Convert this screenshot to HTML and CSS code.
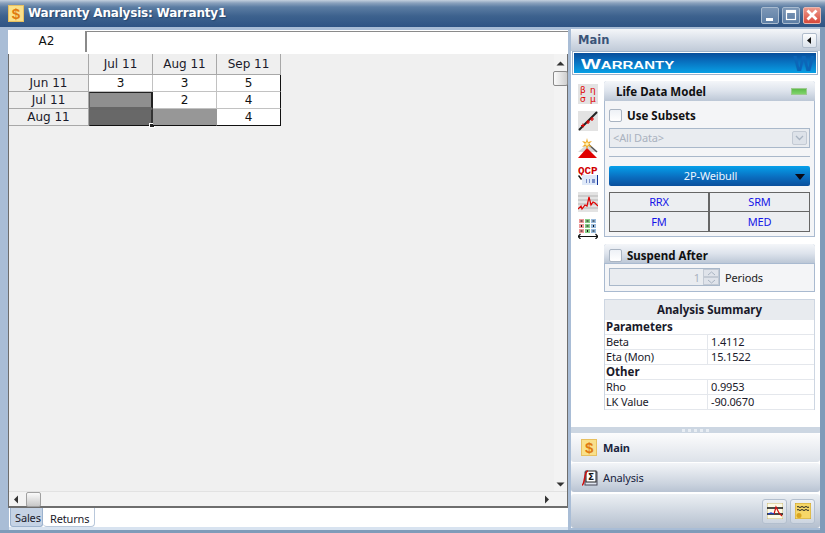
FILE: index.html
```html
<!DOCTYPE html>
<html lang="en">
<head>
<meta charset="utf-8">
<title>Warranty Analysis: Warranty1</title>
<link rel="stylesheet" href="styles.css">
</head>
<body>
<div class="window">
  <header class="titlebar">
    <span class="app-icon">$</span>
    <span class="title">Warranty Analysis: Warranty1</span>
    <div class="controls">
      <span class="ctl"><svg width="16" height="15" viewBox="0 0 16 15"><rect x="4" y="10" width="7" height="3" fill="#fff"/></svg></span>
      <span class="ctl"><svg width="16" height="15" viewBox="0 0 16 15"><rect x="3.500" y="2.500" width="9" height="9" fill="none" stroke="#fff" stroke-width="1.200"/><rect x="3" y="2" width="10" height="3" fill="#fff"/></svg></span>
      <span class="ctl ctl-close"><svg width="16" height="15" viewBox="0 0 16 15"><path d="M3.500 2.500l9 9M12.500 2.500l-9 9" stroke="#fff" stroke-width="2.800"/></svg></span>
    </div>
  </header>
  <div class="main">
    <section class="sheet-col">
      <div class="formula">
        <div class="cellref">A2</div>
        <div class="formula-input"></div>
      </div>
      <div class="sheet-pane">
        <div class="sheet-top">
          <div class="sheet-area">
            <div class="grid">
              <div class="hd corner"></div><div class="hd">Jul 11</div><div class="hd">Aug 11</div><div class="hd">Sep 11</div>
              <div class="rh">Jun 11</div><div class="c">3</div><div class="c">3</div><div class="c">5</div>
              <div class="rh">Jul 11</div><div class="c sel1"></div><div class="c">2</div><div class="c">4</div>
              <div class="rh">Aug 11</div><div class="c sel2"><span class="handle"></span></div><div class="c sel3"></div><div class="c">4</div>
            </div>
          </div>
          <div class="vscroll">
            <svg class="arrow-v" width="13" height="13" viewBox="0 0 13 13"><path d="M2.500 8.500h8L6.500 4.500z" fill="#333"/></svg>
            <div class="vthumb"></div>
            <svg class="arrow-v arrow-end" width="13" height="13" viewBox="0 0 13 13"><path d="M2.500 4.500h8L6.500 8.500z" fill="#333"/></svg>
          </div>
        </div>
        <div class="hscroll">
          <svg width="17" height="15" viewBox="0 0 17 15"><path d="M9 3.500v8L5 7.500z" fill="#333"/></svg>
          <div class="hthumb"></div>
          <svg class="arrow-end" width="16" height="15" viewBox="0 0 16 15"><path d="M7 3.500v8L11 7.500z" fill="#333"/></svg>
          <div class="scroll-corner"></div>
        </div>
      </div>
      <div class="tabs">
        <span class="tab tab-off">Sales</span>
        <span class="tab tab-on">Returns</span>
      </div>
    </section>

    <aside class="side">
      <div class="side-head">
        <span>Main</span>
        <span class="collapse"><svg width="7" height="7" viewBox="0 0 7 7"><path d="M5 0v7L1 3.500z" fill="#111"/></svg></span>
      </div>
      <div class="banner">
        <span class="banner-text">Warranty</span>
        <span class="banner-w">W</span>
      </div>
      <div class="side-body">
        <div class="tools">
          <svg class="tool" width="20" height="20" viewBox="0 0 20 20"><rect width="20" height="20" fill="#e3e3e3"/><text class="greek" x="2" y="9">β</text><text class="greek" x="12" y="9">η</text><text class="greek" x="2" y="18">σ</text><text class="greek" x="12" y="18">μ</text></svg>
          <svg class="tool" width="20" height="20" viewBox="0 0 20 20"><rect width="20" height="20" fill="#e3e3e3"/><path d="M1 19L19 1" stroke="#222" stroke-width="2"/><path d="M3 14.500h4M5 12.500v4M8 11h4M10 9v4M12 8h4M14 6v4" stroke="#e00000" stroke-width="1.200"/></svg>
          <svg class="tool" width="20" height="20" viewBox="0 0 20 20"><path d="M0 14L9 6l9 8z" fill="#d8d8d8"/><path d="M0 20L9 10l10 10z" fill="#e00000"/><path d="M10 6l9 8" stroke="#555" stroke-width="1.600"/><path d="M9 0l1 4 4-1-3 3 3 3-4-1-1 4-1-4-4 1 3-3-3-3 4 1z" fill="#f0a820"/><circle cx="9" cy="6" r="1.800" fill="#fff2b0"/></svg>
          <svg class="tool" width="20" height="20" viewBox="0 0 20 20"><text class="qcp" x="0" y="9">QCP</text><rect x="4" y="10" width="16" height="10" fill="#dfe9f8"/><path d="M0.500 10.500l3 4" stroke="#111" stroke-width="1.400"/><path d="M8 15h1M8 17h1M11 15h1M11 17h1M14 15h3M14 17h3M19.500 10v10" stroke="#113399"/></svg>
          <svg class="tool" width="20" height="20" viewBox="0 0 20 20"><rect width="20" height="20" fill="#e3e3e3"/><path d="M0 4h20M0 8h20M0 12h20M0 16h20" stroke="#b5b5b5"/><path d="M0 17l3-3 1 3 3-4 2 1 2-9 2 8 2-3 2 1 3 3" fill="none" stroke="#e00000" stroke-width="1.200"/></svg>
          <svg class="tool" width="20" height="20" viewBox="0 0 20 20"><rect x="1" y="0" width="5" height="4" fill="#e99"/><rect x="7" y="0" width="5" height="4" fill="#8c8"/><rect x="13" y="0" width="5" height="4" fill="#9bd"/><rect x="1" y="5" width="5" height="4" fill="#e99"/><rect x="7" y="5" width="5" height="4" fill="#8c8"/><rect x="13" y="5" width="5" height="4" fill="#9bd"/><rect x="1" y="10" width="5" height="4" fill="#e99"/><rect x="7" y="10" width="5" height="4" fill="#8c8"/><rect x="13" y="10" width="5" height="4" fill="#9bd"/><path d="M2.500 2h2M8.500 2h2M14.500 2h2M3.500 6v2M8.500 7h2M15.500 6v2M2.500 12h2M9.500 11v2M14.500 12h2" stroke="#111"/><path d="M0 17.500h20M2.500 15l-2.500 2.500 2.500 2.500M17.500 15l2.500 2.500-2.500 2.500" fill="none" stroke="#111" stroke-width="1.200"/></svg>
        </div>
        <div class="panels">
          <div class="group">
            <div class="group-head"><span>Life Data Model</span><span class="led"></span></div>
            <div class="group-body">
              <label class="check-row"><span class="check"></span><span>Use Subsets</span></label>
              <div class="select-off">
                <span>&lt;All Data&gt;</span>
                <span class="select-btn"><svg width="9" height="6" viewBox="0 0 9 6"><path d="M1 1l3.500 3.500L8 1" fill="none" stroke="#a9b4c2" stroke-width="1.300"/></svg></span>
              </div>
              <div class="rule"></div>
              <div class="dist">
                <span>2P-Weibull</span>
                <svg class="dist-arrow" width="10" height="6" viewBox="0 0 10 6"><path d="M0 0h10L5 6z" fill="#0a0a14"/></svg>
              </div>
              <div class="methods">
                <span>RRX</span><span>SRM</span><span>FM</span><span>MED</span>
              </div>
            </div>
          </div>
          <div class="group group-suspend">
            <div class="group-head head-suspend"><span class="check"></span><span>Suspend After</span></div>
            <div class="suspend-body">
              <div class="spin">
                <span class="spin-val">1</span>
                <span class="spin-btns">
                  <span class="spin-btn"><svg width="9" height="5" viewBox="0 0 9 5"><path d="M1 4l3.500-3L8 4" fill="none" stroke="#a9b4c2"/></svg></span>
                  <span class="spin-btn"><svg width="9" height="5" viewBox="0 0 9 5"><path d="M1 1l3.500 3L8 1" fill="none" stroke="#a9b4c2"/></svg></span>
                </span>
              </div>
              <span>Periods</span>
            </div>
          </div>
          <div class="summary">
            <div class="sum-title">Analysis Summary</div>
            <div class="sum-sec">Parameters</div>
            <div class="sum-row"><span>Beta</span><span>1.4112</span></div>
            <div class="sum-row"><span>Eta (Mon)</span><span>15.1522</span></div>
            <div class="sum-sec">Other</div>
            <div class="sum-row"><span>Rho</span><span>0.9953</span></div>
            <div class="sum-row"><span>LK Value</span><span>-90.0670</span></div>
          </div>
        </div>
      </div>
      <div class="splitter"><i></i><i></i><i></i><i></i><i></i></div>
      <div class="nav nav-on">
        <span class="nav-dollar">$</span><span>Main</span>
      </div>
      <div class="nav">
        <svg width="17" height="16" viewBox="0 0 17 16"><rect x="4" y="2" width="12" height="13" fill="#dfe5f0" stroke="#445"/><rect x="5" y="1" width="10" height="11" fill="#fff" stroke="#222"/><text class="sigma" x="7" y="10">Σ</text><path d="M1 15C4 15 3 1 7 1" fill="none" stroke="#d01010" stroke-width="1.500"/></svg>
        <span>Analysis</span>
      </div>
      <div class="footer">
        <span class="foot-btn"><svg width="16" height="16" viewBox="0 0 16 16"><rect width="16" height="16" fill="#fdfbe8" stroke="#c9b870"/><path d="M0 5h16M0 11h16" stroke="#111" stroke-width="1.300"/><path d="M7 11l2-7 3 6 3 3" fill="none" stroke="#d01010" stroke-width="1.200"/><path d="M1 11l3-1 3 1" fill="none" stroke="#1a3fd0" stroke-width="1.200"/></svg></span>
        <span class="foot-btn"><svg width="16" height="16" viewBox="0 0 16 16"><rect width="16" height="16" fill="#f6d768" stroke="#c9a030"/><path d="M2 4q1-1 2 0t2 0 2 0 2 0 2 0 2 0M2 7q1-1 2 0t2 0 2 0 2 0 2 0 2 0" fill="none" stroke="#222"/><circle cx="4" cy="12.500" r="2.500" fill="#d9a520"/></svg></span>
      </div>
    </aside>
  </div>
</div>
</body>
</html>
```
FILE: styles.css
```css
* { box-sizing: border-box; }
html, body { margin: 0; padding: 0; }
body { width: 825px; height: 533px; overflow: hidden; font-family: "DejaVu Sans", "Liberation Sans", sans-serif; font-size: 12px; color: #111; }
.window { width: 825px; height: 533px; display: flex; flex-direction: column; background: #a9bdd6; border-bottom: 3px solid #7f9bb9; }
.titlebar { height: 27px; flex: none; display: flex; align-items: center; padding-left: 8px; background: linear-gradient(to bottom, #c4d0de 0, #8ba2bd 3px, #5c7da3 7px, #3d628e 16px, #2f5484 27px); color: #fff; }
.app-icon { width: 16px; height: 17px; background: #f9e08a; border: 1px solid #e8c060; color: #e07a10; font: bold 15px/15px "Liberation Sans", sans-serif; text-align: center; }
.title { margin-left: 4px; font: bold 12px/17px "DejaVu Sans", sans-serif; letter-spacing: -0.2px; text-shadow: 1px 1px 1px #25466f; }
.controls { margin-left: auto; margin-right: 4px; display: flex; gap: 3px; padding-top: 3px; }
.ctl { width: 18px; height: 17px; display: flex; align-items: center; justify-content: center; overflow: hidden; border: 1px solid #a9bbcf; border-radius: 2px; background: linear-gradient(#7d97b6, #5d7ea5); }
.ctl svg { flex: none; }
.ctl-close { background: linear-gradient(#ee9a8c, #d8483a); border-color: #e8b8b0; }
.main { flex: 1; display: flex; min-height: 0; border-right: 5px solid #7f9bb9; }
.sheet-col { width: 568px; padding: 3px 0 0 8px; display: flex; flex-direction: column; flex: none; }
.formula { height: 24px; flex: none; display: flex; background: #fff; }
.cellref { width: 75px; margin-left: 1px; text-align: center; line-height: 22px; }
.formula-input { flex: 1; margin: 1px 0 2px 1px; border-left: 2px solid #8a8a8a; border-top: 1px solid #8a8a8a; background: #fff; }
.sheet-pane { flex: 1; display: flex; flex-direction: column; min-height: 0; background: #f0f0f0; border-left: 1px solid #6e6e6e; border-right: 1px solid #6e6e6e; border-bottom: 2px solid #6e6e6e; }
.sheet-top { flex: 1; display: flex; min-height: 0; }
.sheet-area { flex: 1; }
.grid { display: grid; grid-template-columns: 80px 64px 64px 64px; grid-template-rows: 21px 17px 17px 17px; width: 272px; }
.hd, .rh { background: #efefef; border-right: 1px solid #a8a8a8; border-bottom: 1px solid #a8a8a8; display: flex; align-items: center; justify-content: center; color: #1a1a2a; }
.corner { background: #efefef; }
.c { background: #fff; border-right: 1px solid #c2c2c2; border-bottom: 1px solid #c2c2c2; text-align: center; line-height: 16px; position: relative; }
.c:nth-child(4n) { border-right: 1px solid #111; }
.c:nth-last-child(-n+3) { border-bottom: 1px solid #111; }
.sel1 { background: #8f8f8f; border-width: 1px 2px 2px 1px; border-style: solid; border-color: #222 #222 #666 #666; }
.sel2 { background: #686868; border: 1px solid #666; border-right: 2px solid #333; border-bottom: 1px solid #111; }
.sel3 { background: #979797; border-right-color: #979797; }
.handle { position: absolute; right: -4px; bottom: -3px; width: 6px; height: 5px; background: #222; border: 1px solid #fff; }
.vscroll { width: 13px; flex: none; display: flex; flex-direction: column; background: #f3f3f3; align-items: center; padding-top: 1px; }
.vthumb { width: 15px; height: 15px; flex: none; margin-top: 1px; border: 1px solid #8a8a8a; border-radius: 2px; background: linear-gradient(to right, #fafafa, #cfcfcf); }
.arrow-v { flex: none; margin-top: 2px; }
.vscroll .arrow-end { margin-top: auto; }
.hscroll { height: 15px; flex: none; display: flex; align-items: center; background: #f3f3f3; border-top: 1px solid #e2e2e2; }
.hthumb { width: 15px; height: 15px; flex: none; border: 1px solid #a0a0a0; border-radius: 2px; background: linear-gradient(#fafafa, #c8c8c8); }
.hscroll .arrow-end { margin-left: auto; }
.scroll-corner { width: 13px; flex: none; }
.tabs { height: 22px; flex: none; display: flex; align-items: flex-start; background: linear-gradient(#fff 19px, #d8e3f0 19px); margin: 0 0 0 1px; padding-left: 1px; font: 11px "Noto Sans", sans-serif; letter-spacing: -0.15px; color: #1a1a2a; }
.tab { display: block; height: 19px; line-height: 19px; white-space: nowrap; }
.tab-off { width: 33px; padding-left: 4px; background: #c5d3e5; border: 1px solid #9cb2cd; border-top: none; border-radius: 0 0 3px 3px; }
.tab-on { width: 52px; padding: 1px 0 0 7px; background: #fff; border-right: 1px solid #b9c8db; border-bottom: 1px solid #b9c8db; border-radius: 0 0 4px 4px; }
.side { width: 249px; margin-left: 3px; margin-top: 2px; margin-bottom: 2px; display: flex; flex-direction: column; flex: none; background: #fff; font: 11px "Noto Sans", sans-serif; letter-spacing: -0.15px; }
.side-head { height: 22px; flex: none; display: flex; align-items: center; justify-content: space-between; padding: 0 3px 0 7px; font: bold 11.500px "DejaVu Sans", sans-serif; letter-spacing: 0; color: #3a5478; background: linear-gradient(#f4f6f9, #d6dde7 55%, #c0cad8); border-radius: 3px 3px 0 0; }
.collapse { width: 15px; height: 15px; background: linear-gradient(#fbfcfd, #dbe2eb); border: 1px solid #b0bccc; border-radius: 2px; display: flex; align-items: center; justify-content: center; }
.banner { height: 24px; flex: none; margin: 0 2px 0 1px; position: relative; overflow: hidden; background: linear-gradient(#084a96 0, #0868b8 35%, #08a4e8 100%); border: 1px solid #9fb3cb; box-shadow: inset 0 0 0 1px #fff; color: #fff; }
.banner-text { position: absolute; left: 8px; top: 4px; font: bold 14px/16px "Liberation Sans", sans-serif; font-variant: small-caps; letter-spacing: 0; transform: scaleX(1.5); transform-origin: left center; }
.banner-w { position: absolute; right: 3px; top: 1px; font: bold 22px/22px "Liberation Sans", sans-serif; color: #0c66b8; }
.side-body { height: 352px; flex: none; background: #fff; display: flex; }
.tools { width: 33px; flex: none; display: flex; flex-direction: column; align-items: center; padding: 9px 0 0 1px; gap: 7px; }
.tool { display: block; flex: none; }
.greek { font: 9px "DejaVu Sans", sans-serif; fill: #e00000; }
.qcp { font: bold 11px/11px "Liberation Mono", monospace; fill: #d00000; }
.sigma { font: bold 9px "DejaVu Sans", sans-serif; fill: #111; }
.panels { flex: 1; padding-top: 6px; padding-right: 5px; display: flex; flex-direction: column; }
.group { border: 1px solid #a9bad0; border-top: none; background: #f4f5f7; flex: none; border-radius: 3px 3px 0 0; }
.group-head { height: 20px; display: flex; align-items: center; justify-content: space-between; padding: 0 8px 0 12px; font: bold 11.500px "Noto Sans", sans-serif; letter-spacing: 0; color: #101010; background: linear-gradient(#f4f6f9, #dde3ec 50%, #bcc7d6); margin: 0 -1px; border-radius: 3px 3px 0 0; }
.led { width: 16px; height: 7px; background: linear-gradient(#5dbb4a, #7fd46a); border: 1px solid #9dc890; }
.group-body { padding: 5px 4px 3px 4px; height: 135px; }
.check-row { display: flex; align-items: center; gap: 5px; height: 19px; font: bold 11.500px "Noto Sans", sans-serif; letter-spacing: 0; }
.check { width: 13px; height: 13px; flex: none; background: linear-gradient(#eef1f6, #fff); border: 1px solid #a9b4c2; border-radius: 2px; }
.select-off { height: 20px; margin-top: 3px; display: flex; align-items: center; justify-content: space-between; padding: 0 2px 1px 3px; background: #e9ecf0; border: 1px solid #a9b8ca; color: #a9b2bf; }
.select-btn { width: 15px; height: 14px; background: #dde2e9; border: 1px solid #c3cad4; border-radius: 2px; display: flex; align-items: center; justify-content: center; }
.rule { height: 1px; background: #a9b8ca; margin: 8px 0 9px; }
.dist { height: 20px; position: relative; display: flex; align-items: center; justify-content: center; color: #eef6ff; background: linear-gradient(#05a0ea, #0a6ec0 55%, #0a4f9c); border-radius: 2px; padding: 0 0 1px 2px; }
.dist-arrow { position: absolute; right: 5px; top: 8px; }
.methods { display: grid; grid-template-columns: 100px 1fr; grid-template-rows: 19px 19px; margin-top: 6px; border: 1px solid #666; background: #eceef1; color: #1515e8; }
.methods span { display: flex; align-items: center; justify-content: center; padding-bottom: 1px; }
.methods span:nth-child(odd) { border-right: 2px solid #666; }
.methods span:nth-child(-n+2) { border-bottom: 1px solid #666; }
.group-suspend { margin-top: 7px; }
.head-suspend { justify-content: flex-start; gap: 5px; padding: 4px 0 0 5px; height: 19px; }
.suspend-body { height: 28px; display: flex; align-items: center; padding: 0 0 1px 4px; gap: 5px; color: #222; border-top: 1px solid #a9bad0; }
.spin { width: 111px; height: 18px; display: flex; align-items: center; justify-content: flex-end; background: #e9ecf0; border: 1px solid #a9b8ca; color: #a9b2bf; }
.spin-val { margin-right: 3px; }
.spin-btns { display: flex; flex-direction: column; width: 16px; height: 16px; }
.spin-btn { flex: 1; display: flex; align-items: center; justify-content: center; background: #dfe3ea; border: 1px solid #c3cad4; }
.summary { margin-top: 7px; border: 1px solid #cdd6e2; background: #fff; height: 111px; flex: none; color: #1a1a2a; }
.sum-title { height: 20px; background: #e8ebef; text-align: center; font: bold 11.500px/20px "Noto Sans", sans-serif; letter-spacing: 0; }
.sum-sec { height: 15px; padding-left: 1px; font: bold 11.500px/14px "Noto Sans", sans-serif; letter-spacing: 0; border-bottom: 1px solid #e4e7ec; }
.sum-row { height: 15px; display: grid; grid-template-columns: 103px 1fr; line-height: 14px; border-bottom: 1px solid #e4e7ec; }
.sum-row span { padding-left: 1px; }
.sum-row span:first-child { border-right: 1px solid #e4e7ec; }
.sum-row span:last-child { padding-left: 3px; }
.splitter { height: 6px; flex: none; display: flex; align-items: center; justify-content: center; gap: 3px; background: #ccd6e2; }
.splitter i { width: 3px; height: 3px; background: #e8edf3; }
.nav { height: 29px; flex: none; display: flex; align-items: center; gap: 5px; padding-left: 10px; margin-bottom: 1px; background: linear-gradient(#f3f5f8, #ccd4df 70%, #b8c3d2); border-radius: 3px; color: #1a2540; }
.nav-on { background: linear-gradient(#fcfcfd, #dde2e9); font-weight: bold; gap: 6px; }
.nav-dollar { width: 16px; height: 17px; background: #f9e08a; border: 1px solid #e8c060; color: #e07a10; font: bold 15px/15px "Liberation Sans", sans-serif; text-align: center; }
.footer { flex: 1; margin-top: 1px; display: flex; align-items: center; justify-content: flex-end; gap: 3px; padding-right: 5px; background: linear-gradient(#ecf0f4, #b5c0cf); border-radius: 3px; }
.foot-btn { width: 25px; height: 25px; display: flex; align-items: center; justify-content: center; border: 1px solid #b3bfce; border-radius: 3px; background: linear-gradient(#eef1f5, #cdd5e0); }
```
